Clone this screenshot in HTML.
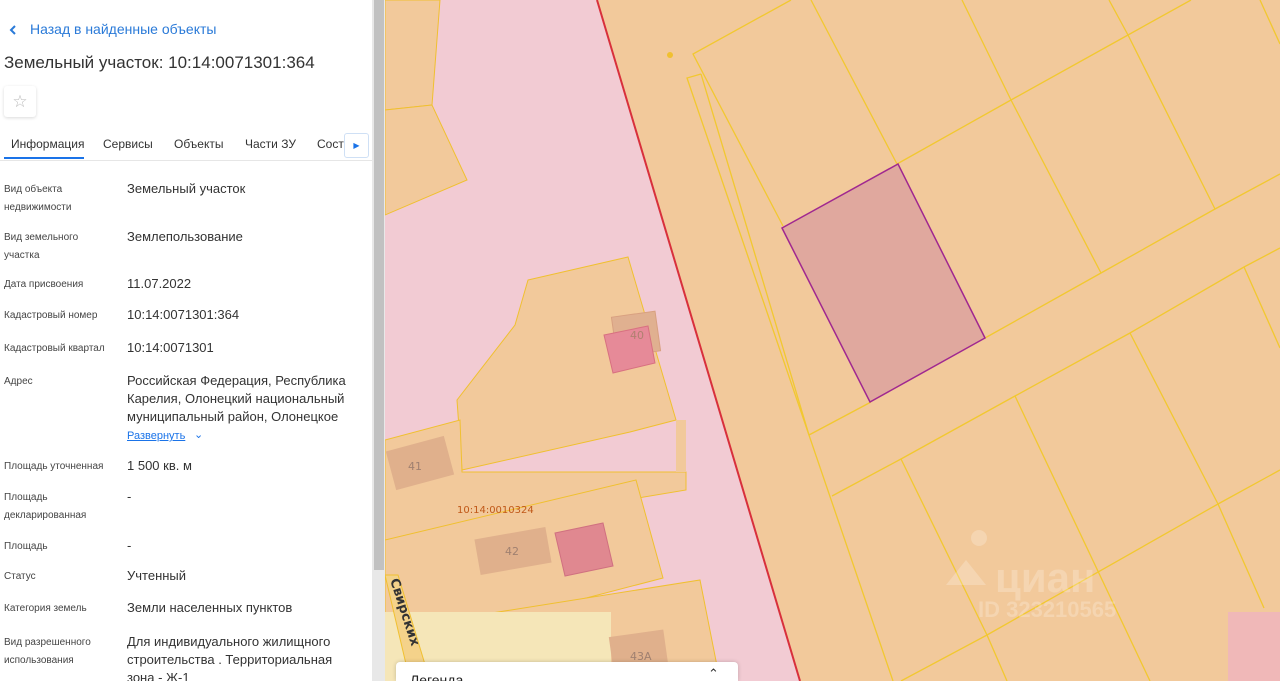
<!DOCTYPE html>
<html><head><meta charset="utf-8"><style>
*{margin:0;padding:0;box-sizing:border-box}
html,body{width:1280px;height:681px;overflow:hidden}
body{position:relative;font-family:"Liberation Sans",sans-serif;background:#fff}
#panel{position:absolute;left:0;top:0;width:372px;height:681px;background:#fff;overflow:hidden}
.abs{position:absolute;white-space:nowrap}
.lab{position:absolute;left:4px;font-size:10px;color:#444;line-height:18px}
.val{position:absolute;left:127px;font-size:13px;color:#333;line-height:18px}
#sb{position:absolute;left:372px;top:0;width:13px;height:681px;background:#e8e8e8}
#sbt{position:absolute;left:374px;top:0;width:10px;height:570px;background:#c1c1c1}
</style></head><body>
<svg style="position:absolute;left:385px;top:0" width="895" height="681" viewBox="385 0 895 681">
<rect x="385" y="0" width="895" height="681" fill="#f2cbd3"/>
<polygon points="597,0 1280,0 1280,681 800,681" fill="#f2c99b"/>
<polygon points="385,0 440,0 432,105 385,110" fill="#f2c99b" stroke="#f0c030" stroke-width="1"/>
<polygon points="385,110 432,105 467,180 385,215" fill="#f2c99b" stroke="#f0c030"/>
<polygon points="528,280 628,257 676,420 630,432 462,470 457,400 515,325" fill="#f2c99b" stroke="#f0c030"/>
<polygon points="385,440 460,420 462,472 686,472 686,490 385,540" fill="#f2c99b" stroke="#f0c030"/>
<polygon points="676,420 686,420 686,472 676,472" fill="#f2c99b"/>
<polygon points="385,540 636,480 663,578 548,608 385,630" fill="#f2c99b" stroke="#f0c030"/>
<polygon points="385,630 700,580 720,681 385,681" fill="#f2c99b" stroke="#f0c030"/>
<rect x="385" y="612" width="226" height="69" fill="#f5e6b8"/>
<polygon points="385,575 398,575 430,681 410,681" fill="#f4d28a" stroke="#f0c030"/>
<rect x="1228" y="612" width="52" height="69" fill="#f0b8b8"/>
<g stroke="#f2c830" stroke-width="1.3" fill="none">
<line x1="597" y1="0" x2="800" y2="681" stroke="#d8303c" stroke-width="2"/>
<polyline points="791,0 693,54 783,226"/>
<polyline points="701,74 687,78 893,681"/>
<line x1="701" y1="74" x2="809" y2="435"/>
<polyline points="897,164 1011,100 1128,35 1191,0"/>
<polyline points="985,338 1101,273 1215,209 1280,174"/>
<line x1="809" y1="435" x2="871" y2="402"/>
<polyline points="832,496 901,459 1015,396 1130,333 1244,267 1280,248"/>
<polyline points="901,681 987,635 1218,504 1280,470"/>
<line x1="811" y1="0" x2="897" y2="164"/>
<polyline points="962,0 1011,100 1101,273"/>
<polyline points="1109,0 1128,35 1215,209"/>
<line x1="1260" y1="0" x2="1280" y2="44"/>
<polyline points="901,459 987,635 1007,681"/>
<line x1="1015" y1="396" x2="1150" y2="681"/>
<polyline points="1130,333 1218,504 1264,608"/>
<line x1="1244" y1="267" x2="1280" y2="348"/>
</g>
<polygon points="782,228 898,164 985,338 870,402" fill="#e0a89e" stroke="#a02890" stroke-width="1.5"/>
<rect x="614" y="314" width="44" height="40" fill="#e0b090" stroke="#d8a080" transform="rotate(-8 636 334)"/>
<polygon points="604,335 648,326 655,363 613,373" fill="#e68a98" stroke="#d87080"/>
<text x="630" y="339" font-size="11" fill="#b08070" font-family="DejaVu Sans">40</text>
<rect x="390" y="443" width="60" height="40" fill="#e0b08c" transform="rotate(-15 420 463)"/>
<text x="408" y="470" font-size="11" fill="#a08070" font-family="DejaVu Sans">41</text>
<rect x="477" y="533" width="72" height="36" fill="#e0b08c" transform="rotate(-10 513 551)"/>
<text x="505" y="555" font-size="11" fill="#a08070" font-family="DejaVu Sans">42</text>
<polygon points="555,533 603,523 613,566 565,576" fill="#e08890" stroke="#d07080"/>
<rect x="612" y="633" width="55" height="50" fill="#e0b08c" transform="rotate(-8 640 658)"/>
<text x="630" y="660" font-size="11" fill="#a08070" font-family="DejaVu Sans">43A</text>
<text x="457" y="513" font-size="10" fill="#c05818" font-family="DejaVu Sans">10:14:0010324</text>
<text x="0" y="0" font-size="13" font-weight="bold" fill="#333" font-family="DejaVu Sans" transform="translate(390,580) rotate(72)">Свирских</text>
<circle cx="670" cy="55" r="3" fill="#f0c030"/>
<g fill="#fff" fill-opacity="0.22">
<circle cx="979" cy="538" r="8"/><polygon points="946,585 966,560 986,585"/>
<text x="995" y="592" font-size="42" font-family="Liberation Sans" font-weight="bold">циан</text>
<text x="978" y="617" font-size="22" font-family="Liberation Sans" font-weight="bold">ID 323210565</text></g>
</svg>
<div style="position:absolute;left:396px;top:662px;width:342px;height:19px;background:#fff;border-radius:4px 4px 0 0;box-shadow:0 0 4px rgba(0,0,0,.2);overflow:hidden">
<span class="abs" style="left:14px;top:10px;font-size:14px;color:#222">Легенда</span>
<span class="abs" style="left:312px;top:4px;font-size:13px;color:#333">⌃</span></div>
<div id="panel">
<svg style="position:absolute;left:9px;top:25px" width="8" height="10"><polyline points="6,1 2,5 6,9" fill="none" stroke="#2a7ad8" stroke-width="2"/></svg>
<span class="abs" style="left:30px;top:21px;font-size:14px;color:#2a7ad8">Назад в найденные объекты</span>
<span class="abs" style="left:4px;top:53px;font-size:17px;color:#333">Земельный участок: 10:14:0071301:364</span>
<div style="position:absolute;left:4px;top:86px;width:32px;height:31px;border-radius:3px;box-shadow:0 1px 3px rgba(0,0,0,.15);text-align:center;line-height:31px;color:#bbb;font-size:17px">☆</div>
<div style="position:absolute;left:0;top:160px;width:372px;height:1px;background:#e6e6e6"></div>
<div style="position:absolute;left:4px;top:157px;width:80px;height:2px;background:#1a73e8"></div>
<span class="abs" style="left:11px;top:137px;font-size:12px;color:#333">Информация</span>
<span class="abs" style="left:103px;top:137px;font-size:12px;color:#333">Сервисы</span>
<span class="abs" style="left:174px;top:137px;font-size:12px;color:#333">Объекты</span>
<span class="abs" style="left:245px;top:137px;font-size:12px;color:#333">Части ЗУ</span>
<span class="abs" style="left:317px;top:137px;font-size:12px;color:#333">Состав</span>
<div style="position:absolute;left:344px;top:133px;width:25px;height:25px;background:#fff;border:1px solid #cfe0f5;border-radius:3px;color:#1a73e8;font-size:8px;text-align:center;line-height:23px">▶</div>
<div class="lab" style="top:181px">Вид объекта<br>недвижимости</div><div class="val" style="top:180px">Земельный участок</div>
<div class="lab" style="top:229px">Вид земельного<br>участка</div><div class="val" style="top:228px">Землепользование</div>
<div class="lab" style="top:276px">Дата присвоения</div><div class="val" style="top:275px">11.07.2022</div>
<div class="lab" style="top:307px">Кадастровый номер</div><div class="val" style="top:306px">10:14:0071301:364</div>
<div class="lab" style="top:340px">Кадастровый квартал</div><div class="val" style="top:339px">10:14:0071301</div>
<div class="lab" style="top:373px">Адрес</div><div class="val" style="top:372px">Российская Федерация, Республика<br>Карелия, Олонецкий национальный<br>муниципальный район, Олонецкое</div>
<span class="abs" style="left:127px;top:430px;font-size:11px;color:#1a73e8;text-decoration:underline">Развернуть</span><span class="abs" style="left:194px;top:428px;font-size:11px;color:#1a73e8">⌄</span>
<div class="lab" style="top:458px">Площадь уточненная</div><div class="val" style="top:457px">1 500 кв. м</div>
<div class="lab" style="top:489px">Площадь<br>декларированная</div><div class="val" style="top:488px">-</div>
<div class="lab" style="top:538px">Площадь</div><div class="val" style="top:537px">-</div>
<div class="lab" style="top:568px">Статус</div><div class="val" style="top:567px">Учтенный</div>
<div class="lab" style="top:600px">Категория земель</div><div class="val" style="top:599px">Земли населенных пунктов</div>
<div class="lab" style="top:634px">Вид разрешенного<br>использования</div><div class="val" style="top:633px">Для индивидуального жилищного<br>строительства . Территориальная<br>зона - Ж-1</div>
</div>
<div id="sb"></div><div id="sbt"></div>
</body></html>
